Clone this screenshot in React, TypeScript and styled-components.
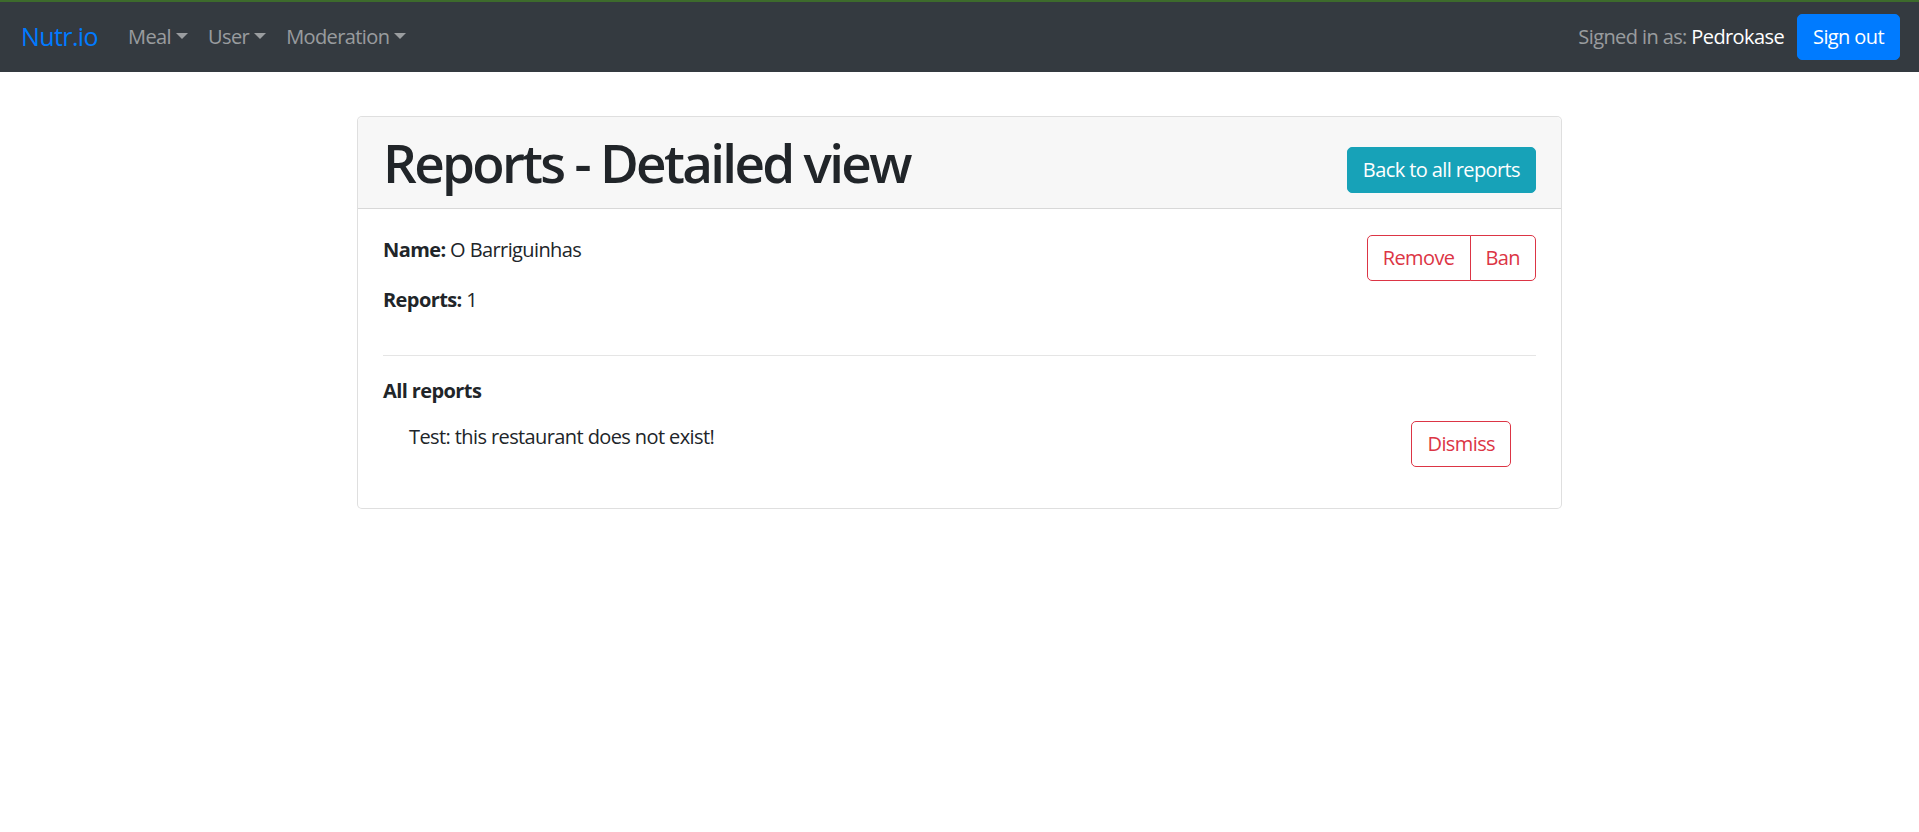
import React from "react";
import styled, { createGlobalStyle } from "styled-components";

const Global = createGlobalStyle`
  html, body { margin: 0; padding: 0; background: #fff; }
  body {
    font-family: "Open Sans", "Noto Sans", sans-serif;
    font-size: 20px;
    line-height: 1.5;
    letter-spacing: -0.6px;
    color: #212529;
  }
  * { box-sizing: border-box; }
`;

const Navbar = styled.nav`
  display: flex;
  align-items: center;
  height: 72px;
  border-top: 2px solid #3d6b2c;
  background: #343a40;
  padding: 0 19px 0 21px;
`;

const Brand = styled.a`
  font-size: 25px;
  color: #007bff;
  line-height: 1.5;
  margin-right: 20px;
  text-decoration: none;
`;

const NavList = styled.div`
  display: flex;
  align-items: center;
  flex: 1;
`;

const NavLink = styled.a`
  color: rgba(255, 255, 255, 0.5);
  padding: 10px;
  text-decoration: none;
  white-space: nowrap;
  &::after {
    content: "";
    display: inline-block;
    margin-left: 5px;
    vertical-align: 5px;
    border-top: 6px solid;
    border-left: 6px solid transparent;
    border-right: 6px solid transparent;
  }
`;

const SignedIn = styled.span`
  color: rgba(255, 255, 255, 0.5);
  margin-right: 13px;
  white-space: nowrap;
`;

const UserName = styled.span`
  color: #fff;
`;

const Button = styled.button<{ $variant: "primary" | "info" | "danger" }>`
  font-family: inherit;
  font-size: 20px;
  letter-spacing: -0.6px;
  line-height: 1.5;
  padding: 7px 15px;
  border-radius: 5px;
  cursor: pointer;
  white-space: nowrap;
  ${({ $variant }) =>
    $variant === "primary"
      ? `background:#007bff;border:1px solid #007bff;color:#fff;`
      : $variant === "info"
      ? `background:#17a2b8;border:1px solid #17a2b8;color:#fff;`
      : `background:#fff;border:1px solid #dc3545;color:#dc3545;`}
`;

const ButtonGroup = styled.div`
  display: inline-flex;
  align-self: flex-start;
  & > ${Button}:first-child {
    border-top-right-radius: 0;
    border-bottom-right-radius: 0;
  }
  & > ${Button}:last-child {
    border-top-left-radius: 0;
    border-bottom-left-radius: 0;
    margin-left: -1px;
  }
`;

const Main = styled.main`
  display: flex;
  justify-content: center;
  padding-top: 44px;
`;

const Card = styled.section`
  width: 1205px;
  border: 1px solid rgba(0, 0, 0, 0.125);
  border-radius: 5px;
  background: #fff;
`;

const CardHeader = styled.header`
  display: flex;
  align-items: flex-end;
  justify-content: space-between;
  background: #f7f7f7;
  border-bottom: 1px solid rgba(0, 0, 0, 0.125);
  border-radius: 5px 5px 0 0;
  padding: 15px 25px;
`;

const Title = styled.h1`
  margin: 0;
  font-size: 53px;
  font-weight: 600;
  letter-spacing: -2.7px;
  line-height: 61px;
`;

const CardBody = styled.div`
  padding: 26px 25px 41px;
`;

const InfoRow = styled.div`
  display: flex;
  justify-content: space-between;
`;

const Info = styled.p`
  margin: 0 0 20px;
`;

const Divider = styled.hr`
  border: 0;
  border-top: 1px solid rgba(0, 0, 0, 0.1);
  margin: 20px 0;
`;

const SectionTitle = styled.h6`
  margin: 0 0 15px;
  font-size: 20px;
  font-weight: 700;
  line-height: 1.5;
`;

const ReportList = styled.ul`
  list-style: none;
  margin: 0;
  padding: 0 25px 0 26px;
`;

const ReportItem = styled.li`
  display: flex;
  justify-content: space-between;
  align-items: flex-start;
`;

const ReportText = styled.span`
  padding-top: 1px;
`;

export default function App() {
  return (
    <>
      <Global />
      <Navbar>
        <Brand href="#">Nutr.io</Brand>
        <NavList>
          <NavLink href="#">Meal</NavLink>
          <NavLink href="#">User</NavLink>
          <NavLink href="#">Moderation</NavLink>
        </NavList>
        <SignedIn>
          Signed in as: <UserName>Pedrokase</UserName>
        </SignedIn>
        <Button $variant="primary">Sign out</Button>
      </Navbar>
      <Main>
        <Card>
          <CardHeader>
            <Title>Reports - Detailed view</Title>
            <Button $variant="info">Back to all reports</Button>
          </CardHeader>
          <CardBody>
            <InfoRow>
              <div>
                <Info>
                  <b>Name:</b> O Barriguinhas
                </Info>
                <Info>
                  <b>Reports:</b> 1
                </Info>
              </div>
              <ButtonGroup>
                <Button $variant="danger">Remove</Button>
                <Button $variant="danger">Ban</Button>
              </ButtonGroup>
            </InfoRow>
            <Divider />
            <SectionTitle>All reports</SectionTitle>
            <ReportList>
              <ReportItem>
                <ReportText>Test: this restaurant does not exist!</ReportText>
                <Button $variant="danger">Dismiss</Button>
              </ReportItem>
            </ReportList>
          </CardBody>
        </Card>
      </Main>
    </>
  );
}
